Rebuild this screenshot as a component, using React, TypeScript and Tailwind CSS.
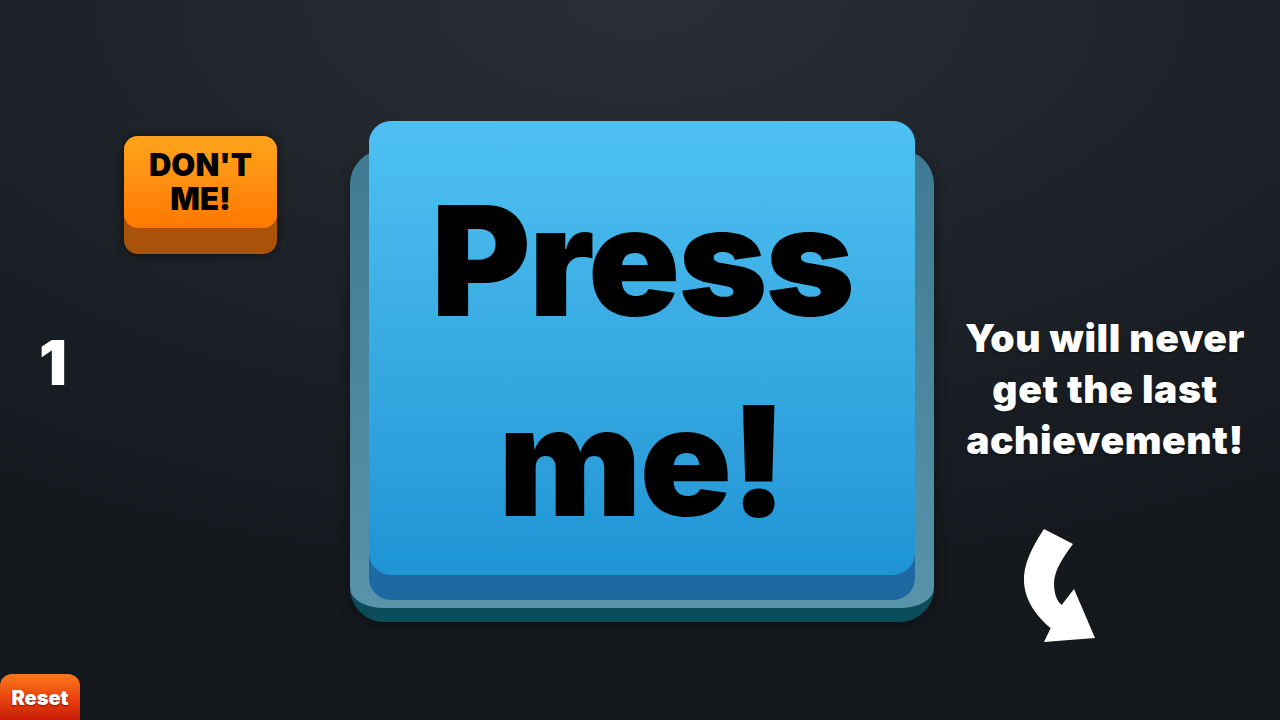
import { useState } from 'react';

const font = { fontFamily: 'Inter, "Noto Sans", sans-serif' };

function CurvedArrow() {
  return (
    <svg width="80" height="120" viewBox="0 0 80 120" className="block">
      <path
        d="M25 4 L54 19 C44 32 35 46 35 58 C35 69 38 76 42.7 80 L55 64 L76 113 L25 117 L31.7 103 C18 92 6 76 5 57 C4 40 13 22 25 4 Z"
        fill="#ffffff"
      />
    </svg>
  );
}

export default function App() {
  const [count, setCount] = useState(1);

  return (
    <div
      className="w-[1280px] h-[720px] overflow-hidden flex bg-[radial-gradient(ellipse_90%_80%_at_50%_0%,#2a2f36_0%,#1d2228_55%,#15191e_100%)] select-none"
      style={font}
    >
      {/* Left column: decoy button, counter, reset */}
      <div className="w-[350px] h-full flex flex-col">
        <button className="ml-[124px] mt-[136px] w-[153px] h-[118px] rounded-[14px] bg-[#a9520a] shadow-[0_0_10px_rgba(0,0,0,0.55)] flex flex-col">
          <div className="h-[92px] rounded-[14px] bg-gradient-to-b from-[#ffa41c] to-[#ff7800] flex flex-col items-center justify-center text-black font-black text-[31px] leading-[34px] tracking-[0px]">
            <span>DON'T</span>
            <span>ME!</span>
          </div>
        </button>

        <div className="ml-[39px] mt-[78px] text-white font-black text-[62px] leading-none">{count}</div>

        <button
          onClick={() => setCount(1)}
          className="mt-auto w-[80px] h-[46px] rounded-t-[12px] bg-gradient-to-b from-[#f8791c] via-[#ec4410] to-[#c81a08] text-white font-black text-[20px] leading-none pt-[2px] [text-shadow:0_1px_2px_rgba(90,0,0,0.7)]"
        >
          Reset
        </button>
      </div>

      {/* Main button */}
      <div className="w-[584px] pt-[150px]">
        <div className="h-[472px] flex flex-col rounded-[34px] bg-gradient-to-b from-[#3f7a93] to-[#5793a9] border-b-[14px] border-[#0b4c5b] px-[19px] pb-[8px] shadow-[0_4px_12px_rgba(0,0,0,0.4)]">
          <button
            onClick={() => setCount((c) => c + 1)}
            className="w-full -mt-[29px] h-[479px] shrink-0 rounded-[22px] bg-[#1f69a3] flex flex-col"
          >
            <div className="w-full h-[454px] rounded-[22px] bg-gradient-to-b from-[#4ec1f2] to-[#1f94d4] flex flex-col items-center justify-center text-black font-black text-[152px] leading-[200px] tracking-[-2px] pt-[26px]">
              <span>Press</span>
              <span>me!</span>
            </div>
          </button>
        </div>
      </div>

      {/* Right column: taunt + arrow */}
      <div className="flex-1 flex flex-col items-center">
        <p className="mt-[312px] ml-[-4px] text-white font-black text-[39px] leading-[51px] text-center tracking-[0.6px] [text-shadow:0_1px_2px_rgba(0,0,0,0.6)]">
          You will never
          <br />
          get the last
          <br />
          achievement!
        </p>
        <div className="mt-[60px] ml-[-96px]">
          <CurvedArrow />
        </div>
      </div>
    </div>
  );
}
